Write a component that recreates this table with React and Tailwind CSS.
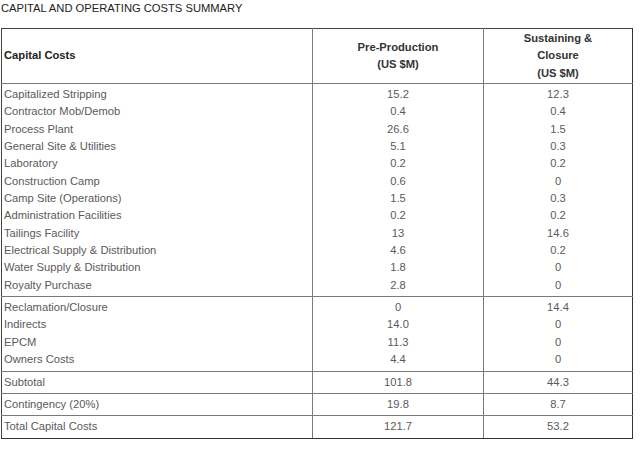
import React from "react";

const group1 = [
  ["Capitalized Stripping", "15.2", "12.3"],
  ["Contractor Mob/Demob", "0.4", "0.4"],
  ["Process Plant", "26.6", "1.5"],
  ["General Site & Utilities", "5.1", "0.3"],
  ["Laboratory", "0.2", "0.2"],
  ["Construction Camp", "0.6", "0"],
  ["Camp Site (Operations)", "1.5", "0.3"],
  ["Administration Facilities", "0.2", "0.2"],
  ["Tailings Facility", "13", "14.6"],
  ["Electrical Supply & Distribution", "4.6", "0.2"],
  ["Water Supply & Distribution", "1.8", "0"],
  ["Royalty Purchase", "2.8", "0"],
];
const group2 = [
  ["Reclamation/Closure", "0", "14.4"],
  ["Indirects", "14.0", "0"],
  ["EPCM", "11.3", "0"],
  ["Owners Costs", "4.4", "0"],
];
const singles = [
  ["Subtotal", "101.8", "44.3"],
  ["Contingency (20%)", "19.8", "8.7"],
  ["Total Capital Costs", "121.7", "53.2"],
];

function Group({ rows }) {
  return (
    <tr>
      <td className="border border-[#7a7a7a] border-l-[#444] py-[2px] pl-[2px] align-top">
        {rows.map((r) => (
          <div key={r[0]} className="leading-[17.35px]">{r[0]}</div>
        ))}
      </td>
      <td className="border border-[#7a7a7a] py-[2px] text-center align-top">
        {rows.map((r, i) => (
          <div key={i} className="leading-[17.35px]">{r[1]}</div>
        ))}
      </td>
      <td className="border border-[#7a7a7a] border-r-[#333] py-[2px] text-center align-top">
        {rows.map((r, i) => (
          <div key={i} className="leading-[17.35px]">{r[2]}</div>
        ))}
      </td>
    </tr>
  );
}

export default function App() {
  return (
    <div
      className="w-[640px] h-[449px] bg-white pl-[1px] text-[11.2px]"
      style={{ fontFamily: '"Liberation Sans", Arial, sans-serif' }}
    >
      <div className="leading-[17px] text-[#222]">CAPITAL AND OPERATING COSTS SUMMARY</div>
      <table className="mt-[11px] w-[631px] border-collapse border border-[#444] text-[#5a5a5a] table-fixed">
        <colgroup>
          <col className="w-[311px]" />
          <col className="w-[171px]" />
          <col className="w-[149px]" />
        </colgroup>
        <thead>
          <tr className="h-[55px]">
            <th className="border border-[#7a7a7a] border-l-[#444] border-t-[#444] text-left pl-[2px] font-bold text-[#222] align-middle leading-[17.5px]">
              Capital Costs
            </th>
            <th className="border border-[#7a7a7a] border-t-[#444] text-center font-bold text-[#333] align-middle leading-[17.5px]">
              <div>Pre-Production</div>
              <div>(US $M)</div>
            </th>
            <th className="border border-[#7a7a7a] border-t-[#444] border-r-[#333] text-center font-bold text-[#333] align-middle leading-[17.5px]">
              <div>Sustaining &amp;</div>
              <div>Closure</div>
              <div>(US $M)</div>
            </th>
          </tr>
        </thead>
        <tbody>
          <Group rows={group1} />
          <Group rows={group2} />
          {singles.map((r, idx) => (
            <tr key={r[0]}>
              <td className={"border border-[#7a7a7a] border-l-[#444] py-[2px] pl-[2px] leading-[17.35px]" + (idx === 2 ? " border-b-[#333]" : "")}>{r[0]}</td>
              <td className={"border border-[#7a7a7a] py-[2px] text-center leading-[17.35px]" + (idx === 2 ? " border-b-[#333]" : "")}>{r[1]}</td>
              <td className={"border border-[#7a7a7a] border-r-[#333] py-[2px] text-center leading-[17.35px]" + (idx === 2 ? " border-b-[#333]" : "")}>{r[2]}</td>
            </tr>
          ))}
        </tbody>
      </table>
    </div>
  );
}
